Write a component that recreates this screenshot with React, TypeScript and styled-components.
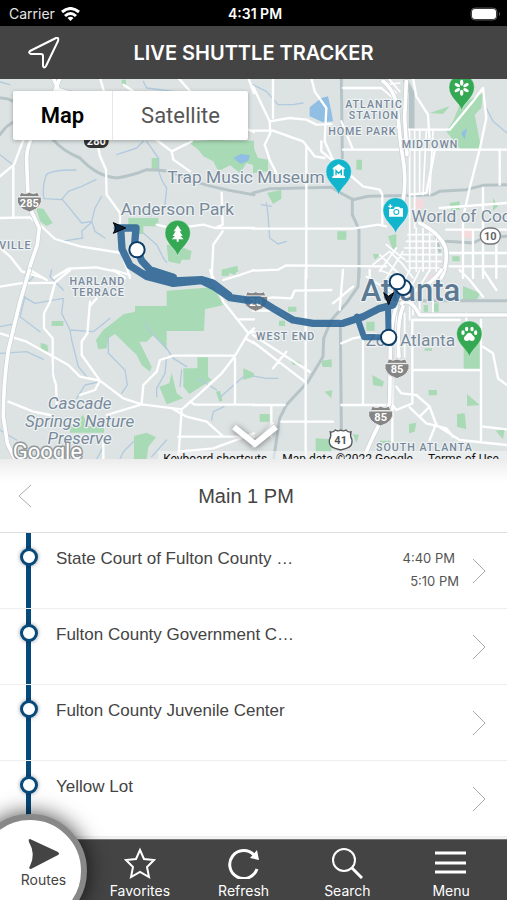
import React from "react";
import styled, { createGlobalStyle, css } from "styled-components";

const GlobalStyle = createGlobalStyle`
  *, *::before, *::after { box-sizing: border-box; }
  body { margin: 0; background: #fff; }
  button { border: 0; padding: 0; margin: 0; background: none; font: inherit; color: inherit; cursor: pointer; }
  h1, h2, ul, ol { margin: 0; padding: 0; font-weight: inherit; list-style: none; }
`;

const uiFont = `Inter, "Liberation Sans", sans-serif`;
const listFont = `"Liberation Sans", Arial, sans-serif`;
const mapFont = `Roboto, "Liberation Sans", sans-serif`;

const Page = styled.div`
  display: flex;
  flex-direction: column;
  height: 100vh;
  min-height: 600px;
  overflow: hidden;
  background: #fff;
  font-family: ${uiFont};
`;

const StatusBar = styled.div`
  display: grid;
  grid-template-columns: 1fr auto 1fr;
  align-items: center;
  flex: none;
  height: 26px;
  padding: 2px 6px 0 9px;
  background: #000;
  color: #e4e4e4;
  font-size: 14px;
  line-height: 20px;
`;

const Carrier = styled.div`
  display: flex;
  align-items: center;
  gap: 6px;
`;

const Clock = styled.time`
  color: #fff;
  font-size: 14px;
  font-weight: 600;
`;

const Battery = styled.div`
  display: flex;
  justify-content: flex-end;
`;

const TitleBar = styled.header`
  display: grid;
  grid-template-columns: 88px 1fr 88px;
  align-items: center;
  flex: none;
  height: 53px;
  background: #444;
  color: #fff;
`;

const LocateButton = styled.button`
  display: grid;
  place-items: center;
  height: 100%;
`;

const Title = styled.h1`
  text-align: center;
  white-space: nowrap;
  font-size: 20px;
  line-height: 28px;
  font-weight: 600;
`;

const MapPanel = styled.section`
  position: relative;
  flex: none;
  height: 380px;
  overflow: hidden;
  background: #dde3e3;
  font-family: ${mapFont};
`;

const MapCanvas = styled.svg`
  display: block;
  width: 100%;
  height: 100%;
`;

const MapTypes = styled.div`
  position: absolute;
  top: 12px;
  left: 13px;
  display: flex;
  height: 49px;
  border-radius: 2px;
  background: #fff;
  box-shadow: 0 1px 4px rgba(0, 0, 0, 0.3);
`;

const MapType = styled.button<{ $active?: boolean }>`
  width: ${(p) => (p.$active ? 99 : 136)}px;
  color: ${(p) => (p.$active ? "#000" : "#565656")};
  font-size: 22px;
  font-weight: ${(p) => (p.$active ? 600 : 400)};
  & + & { border-left: 1px solid #e8e8e8; }
`;

const CollapseButton = styled.button`
  position: absolute;
  left: 50%;
  bottom: 5px;
  transform: translateX(-50%);
  width: 56px;
  height: 36px;
  svg { display: block; overflow: visible; filter: drop-shadow(0 1px 3px rgba(0, 0, 0, 0.5)); }
`;

const MapCredits = styled.div`
  position: absolute;
  right: 0;
  bottom: -8px;
  display: flex;
  gap: 15px;
  padding: 0 8px 0 5px;
  background: rgba(245, 245, 245, 0.6);
  color: #111;
  font-size: 12px;
  line-height: 16px;
  white-space: nowrap;
  a { color: inherit; text-decoration: none; }
`;

const RouteBar = styled.div`
  display: grid;
  grid-template-columns: 50px 1fr 65px;
  align-items: center;
  flex: none;
  height: 74px;
  padding-top: 1px;
  border-bottom: 1px solid #dedede;
  background: linear-gradient(#ececec, #fafafa 16px, #fff 24px);
  color: #444;
`;

const BackButton = styled.button`
  display: grid;
  place-items: center;
  height: 100%;
`;

const RouteName = styled.h2`
  text-align: center;
  font-family: ${listFont};
  font-size: 20px;
  line-height: 24px;
`;

const Stops = styled.ol`
  flex: 1;
  min-height: 0;
  overflow: hidden;
  background: #f3f3f3;
`;

const Stop = styled.li`
  height: 76px;
  border-bottom: 1px solid #eee;
  background: #fff;
`;

const StopButton = styled.button`
  display: grid;
  grid-template-columns: 56px 1fr auto 48px;
  width: 100%;
  height: 100%;
  color: #444;
  text-align: left;
  font-family: ${listFont};
`;

const Track = styled.span`
  display: flex;
  justify-content: center;
  height: 100%;
  padding-top: 15px;
  background: linear-gradient(#064a7c, #064a7c) 26px 0 / 5px 100% no-repeat;
`;

const StopDot = styled.span`
  width: 18px;
  height: 18px;
  margin-left: 1px;
  border: 3px solid #064a7c;
  border-radius: 50%;
  background: #fff;
  box-shadow: 0 0 4px rgba(0, 0, 0, 0.4);
`;

const StopName = styled.span`
  padding-top: 15px;
  font-size: 17px;
  line-height: 22px;
  white-space: nowrap;
`;

const Times = styled.span`
  display: flex;
  flex-direction: column;
  padding-top: 14px;
  font-family: ${uiFont};
  font-size: 13px;
  line-height: 23px;
  color: #555;
`;

const Departure = styled.span<{ $inset?: boolean }>`
  text-align: right;
  padding-right: ${(p) => (p.$inset ? 4 : 0)}px;
`;

const Chevron = styled.span`
  display: grid;
  place-items: center;
  padding-right: 9px;
`;

const TabBar = styled.nav`
  position: relative;
  flex: none;
  height: 61px;
  border-top: 1px solid #777;
  background: #444;
  color: #fff;
`;

const Tabs = styled.ul`
  display: grid;
  grid-template-columns: 88px repeat(4, 1fr);
  height: 100%;
  padding-right: 4px;
`;

const tabText = css`
  font-size: 14px;
  line-height: 18px;
`;

const TabButton = styled.button`
  display: flex;
  flex-direction: column;
  align-items: center;
  width: 100%;
  height: 100%;
  padding-top: 7px;
  gap: 3px;
  ${tabText}
`;

const RoutesButton = styled.button`
  position: absolute;
  left: -27px;
  top: -26px;
  display: flex;
  flex-direction: column;
  align-items: center;
  width: 114px;
  height: 114px;
  padding: 19px 0 0 27px;
  gap: 2px;
  border: 6px solid #888;
  border-radius: 50%;
  background: #fff;
  color: #444;
  box-shadow: 0 0 22px rgba(0, 0, 0, 0.75);
  ${tabText}
`;

/* ---------- map artwork: four tiles, three units to a pixel ---------- */

const tiles = [
  {
    at: "translate(0 -3)",
    parks: [
      "M562 190 L640 186 L762 188 V262 L740 255 L720 285 L690 262 L655 280 L640 250 L610 235 L595 215 Z",
      "M455 240 H478 V275 H455 Z",
      "M108 390 L130 392 L158 435 L140 445 L120 430 Z",
      "M385 420 H475 V445 H430 V468 H415 V445 H385 Z",
      "M500 500 L540 505 L575 520 L570 545 L545 545 L540 558 L505 550 Z",
      "M665 575 L712 563 L715 582 L690 582 L685 594 H665 Z",
      "M365 5 H378 V25 H365 Z",
    ],
    blocks: [],
    lakes: ["M700 240 L722 228 L750 232 L745 248 L722 258 Z"],
    streams: [
      "M228 276 Q150 275 138 292 Q125 330 132 362 L185 365 L205 340 L245 325 L288 305",
      "M305 355 L285 390 L275 430 L245 435 L200 380 L185 362 M275 430 L285 460 L315 480",
      "M275 432 L245 460 L248 480 L185 490",
      "M440 190 L475 240 Q470 290 500 330 L495 380 L450 415",
      "M350 230 L410 210 L430 190 M0 230 L40 262 M430 465 L470 500 L490 540 L500 553",
      "M430 10 L440 30 L520 40 M0 12 L30 20",
    ],
    rails: [
      "M0 60 Q20 58 40 70 M0 170 Q20 140 45 130",
      "M160 186 Q190 220 240 240 Q290 295 350 300 Q400 292 440 275 Q500 275 530 288 Q600 325 762 350",
    ],
    roads: [
      "M300 0 L312 40 L290 186 L300 235 L318 275 L320 350 L360 405 V440",
      "M70 186 L42 260 L0 295 M40 260 V420 M0 420 L90 418 L130 450 L165 483 L240 505 L365 525 L390 600",
      "M0 510 L30 535 L65 580 L130 600 M160 600 L205 572 L290 568 L345 580 L375 600",
      "M535 0 L575 45 M370 20 L400 40 M470 186 L515 220 L520 245 L570 280 M515 220 L575 190 M745 155 L762 162 M745 0 L762 45",
      "M470 440 L520 452 L610 440 L645 450 L762 450 M645 450 L668 440 L665 345 M668 460 L640 500 L635 600",
    ],
    highways: ["M180 0 L160 50 L92 186 Q78 220 80 250 L85 380 L118 450 L112 500 L78 600", "M160 0 L175 35 L210 45"],
    streets: [],
  },
  {
    at: "translate(759 -3)",
    parks: [
      "M620 80 L690 45 L685 90 L665 110 L685 213 L620 213 L580 160 L600 130 Z",
      "M530 105 L590 85 L570 108 Z",
      "M0 205 L15 240 L45 245 L45 280 L0 285 Z",
      "M310 245 H327 V275 H310 Z M42 345 L85 335 L85 362 L60 378 Z",
      "M253 460 H280 V485 H253 Z M405 475 L430 468 V505 L420 518 Z M360 528 H385 L365 545 Z",
      "M590 375 L620 370 V395 L595 400 Z M720 360 L735 385 L720 398 Z M598 535 H620 V550 H598 Z M650 225 L665 215",
    ],
    blocks: ["M480 362 H512 V392 H480 Z M622 450 H658 V480 H622 Z M520 600 L560 580 L550 600 Z"],
    lakes: ["M170 88 L205 60 L225 55 L235 100 L240 130 L210 133 L170 115 Z", "M625 165 L642 150 L635 185 Z"],
    streams: ["M0 20 L40 40 L75 80 L120 80 L150 75", "M40 375 L45 410 L50 480 L75 498 L100 490 M25 380 L55 385", "M700 90 L720 130 L762 165"],
    rails: [
      "M265 0 L268 240",
      "M0 345 L50 332 L235 328 Q270 350 300 365 L345 355 L500 352 L540 350 L560 340 L640 335 L690 322 L762 320",
      "M298 362 V410 L318 455 V600 M455 10 L472 45 V155 M462 10 L480 45 V155 M580 490 L660 495 L690 480 L762 475",
      "M550 480 L560 520",
    ],
    roads: [
      "M0 25 L50 130 L110 120 L160 125 L190 140 L235 138 M60 0 V120 M50 130 L52 165 L35 200 L50 245 L70 285",
      "M0 158 H60 L150 190 L185 235 L215 240 M205 190 L205 220 L235 245 M175 0 L185 40 L220 90 L215 190 L240 245",
      "M270 30 H385 M270 215 H762 M265 130 L300 215 M160 205 V600 M290 290 L330 325 L380 335 L388 350",
      "M0 452 H300 L375 440 L400 445 M0 578 L75 575 L100 562 L400 565 M388 355 V440",
      "M480 0 L490 55 L525 110 L530 190 M460 155 H590 M590 155 L660 70 L690 30 L700 120 L680 215 L650 330 L630 420 V600",
      "M470 350 L520 345 L545 220 M560 390 L762 375 M690 330 V600 M740 215 V320",
      "M580 455 H762 M590 525 H762 M590 565 H762 M660 455 V600 M730 500 V600",
    ],
    highways: [
      "M390 10 Q430 40 435 110 Q440 180 448 230 Q462 300 450 370",
      "M460 10 L455 120 L462 230",
      "M500 435 Q560 465 578 510 Q585 560 565 600",
    ],
    streets: [
      "M470 160 V450 M485 160 V450 M500 160 V340 M520 160 L510 350 M540 160 L530 350",
      "M465 470 H550 M460 490 H560 M455 510 H565 M450 530 H565 M460 550 H565 M470 570 H560",
      "M470 450 V580 M490 450 V580 M510 450 V580 M530 460 V580 M550 480 V580",
      "M360 560 L410 520 L450 560 L480 600 M400 500 L455 545 M380 530 L440 590 M430 510 L380 580 M450 520 L400 600",
      "M395 10 L430 45 M410 5 L440 40 M400 20 L440 15 M385 30 L420 60",
    ],
  },
  {
    at: "translate(0 573)",
    parks: [
      "M500 62 L640 52 L670 105 L615 118 L612 183 L500 183 V240 L460 195 L440 215 L418 215 L455 290 L450 305 L425 285 L410 255 L345 192 L325 205 L320 235 L295 238 L288 210 L310 180 L372 132 L405 125 V108 H500 Z",
      "M550 295 H592 V262 H624 V320 L635 330 L568 372 L550 350 Z",
      "M478 350 L508 340 L515 308 L530 370 L550 385 L500 403 Z",
      "M155 153 H190 V168 H155 Z M122 218 L142 225 L145 245 L122 240 Z",
      "M210 470 L250 435 L262 468 L312 470 V488 H210 Z M402 498 L440 488 L468 502 L445 530 L440 567 H402 Z",
      "M730 295 L762 310 V320 L730 330 Z M648 365 L660 362 L668 392 L658 395 Z M665 0 H712 L705 15 Z",
    ],
    blocks: [],
    lakes: [],
    streams: [
      "M100 20 L75 50 L70 80 L105 100 L190 85 M75 80 L60 140 L120 185 M155 0 L150 20 L190 60",
      "M190 85 L185 130 L210 180 L280 185 L330 145 M210 180 L215 210 L235 290 L260 320 M325 200 L325 250 L375 300 L382 345 L365 370",
      "M0 250 L80 245 L130 268 M0 170 L50 160 M435 160 L445 180 L500 235 L520 265 L560 290",
      "M500 260 L495 310 L470 355 V380 M545 300 L540 350 M595 325 L650 360 M662 380 L730 320",
      "M230 385 L255 345 L300 335 M360 567 L370 545 L400 515 M290 567 L310 530 M455 560 L500 510 M635 450 L640 425 L672 410",
      "M0 480 L50 510 M155 280 V310 L165 325",
    ],
    rails: [],
    roads: [
      "M0 50 L60 40 L165 38 L210 0 M90 0 L140 30 M165 38 L150 95 L132 130 V175 L158 205 V310 L168 345 L170 400",
      "M0 190 L80 215 L205 285 L240 320 L300 332 L370 385 L425 403 L545 418 L600 370 L665 310 L700 265 L745 190",
      "M270 95 L262 190 L245 215 V255 L300 332 L285 360 L240 375 M268 110 L290 85 M25 395 L100 425 L150 435 M320 435 L425 403",
      "M425 400 L430 345 L470 305 L480 270 L520 257 H705 M545 418 L535 567 M515 415 L560 440 L620 455 L670 500",
      "M705 265 V403 M570 395 L585 404 H762 M535 500 H762 M310 500 V567 M535 545 L640 535 L762 490",
      "M630 0 L670 95 L745 190 L762 185 M670 30 L720 15 L762 0 M715 148 H762 M735 205 L762 220 M745 190 L762 175",
      "M340 0 L390 15",
    ],
    highways: ["M88 0 L60 95 L25 240 Q10 340 10 440 L22 520 L45 567"],
    streets: [],
  },
  {
    at: "translate(759 573)",
    parks: [
      "M632 190 H684 V300 H632 Z M630 48 L682 70 L670 92 H630 Z M340 155 H365 V182 H340 Z",
      "M105 110 H130 V125 H105 Z M78 152 H96 V168 H78 Z M205 272 L236 268 V292 L208 290 Z M215 365 L238 360 L235 385 Z",
      "M358 315 L393 335 L388 350 L360 345 Z M527 360 H552 V376 H527 Z M642 372 L680 405 L642 408 Z M612 432 L635 430 L640 478 L612 470 Z",
      "M468 462 L490 458 L485 485 L468 490 Z M188 505 L235 508 V545 H188 Z M300 492 L318 495 L310 520 Z M728 482 L755 478 L750 508 Z M20 432 H50 V455 H20 Z M515 235 H537 V242 H515 Z M110 265 L145 280 L120 285 Z",
      "M512 105 H525 V125 H512 Z M542 100 H557 V125 H542 Z M380 512 H412 V520 H380 Z",
    ],
    blocks: ["M530 20 L555 5 L562 12 L535 32 Z"],
    lakes: [],
    streams: ["M0 318 L40 325 L75 325"],
    rails: [
      "M318 0 L315 50 L280 100 L235 150 L212 205 L210 260 L165 335 L100 405 L80 445 L62 567",
      "M262 165 L265 480 M440 92 H762",
    ],
    roads: [
      "M0 92 L60 82 L115 85 L125 62 L235 60 M158 0 V567 M0 122 H80 L110 150 M0 215 L155 335 M0 195 L170 305 M60 295 L100 245",
      "M0 405 H95 M265 405 H400 M85 455 H240 M265 220 L300 205 L330 200 M330 200 V405 M55 405 V500 M240 100 L300 50",
      "M478 150 V300 H684 M478 300 V400 L430 420 L418 405 M684 150 V510 M690 230 L720 250 L735 325 L762 345 M480 150 H620 M690 470 L762 478",
      "M430 350 L445 370 L490 375 L530 410 L550 465 L620 510 L762 525 M470 412 L520 460 L580 475 L600 500 M530 410 L500 440 M418 310 V560",
      "M0 530 L60 460 M620 0 L650 30 L690 80 M690 0 L730 60 M270 0 L260 120 M350 0 L350 60 M640 130 V150 M550 460 L530 510 M265 150 L240 165",
    ],
    highways: [
      "M445 100 Q470 80 500 135 H762",
      "M430 110 Q410 170 412 280 L410 400 L360 500 L330 567",
      "M450 110 Q430 160 438 260",
      "M565 0 Q540 40 490 60 L440 85",
    ],
    streets: [
      "M380 0 L480 40 M340 20 L440 80 M470 0 L440 60 M500 0 L470 60 M530 0 L500 50 M450 20 L480 55 M430 130 V260 M455 130 V260 M470 110 V150",
      "M480 90 V135 M500 90 V135 M540 90 V135",
    ],
  },
];

const join = (p: string[]) => p.join(" ");

const MapTile = ({ tile }: { tile: (typeof tiles)[number] }) => (
  <g transform={tile.at} fill="none" strokeLinejoin="round" strokeLinecap="round">
    <path d={join(tile.parks)} fill="#a8dab5" />
    <path d={join(tile.blocks)} fill="#f3dadd" />
    <path d={join(tile.lakes)} fill="#90bfe3" />
    <path d={join(tile.streams)} stroke="#b2cade" strokeWidth="4" />
    <path d={join(tile.rails)} stroke="#b7c4c7" strokeWidth="9" />
    <path d={join(tile.roads)} stroke="#fff" strokeWidth="7" />
    <path d={join(tile.streets)} stroke="#fff" strokeWidth="5" />
    <path d={join(tile.highways)} stroke="#c9d1d3" strokeWidth="15" />
    <path d={join(tile.highways)} stroke="#fff" strokeWidth="11" />
  </g>
);

const Halo = styled.text`
  paint-order: stroke;
  stroke: #eef2f2;
  stroke-width: 7px;
  stroke-linejoin: round;
  fill: #78899b;
`;
const Place = styled(Halo)`
  font-size: 52px;
`;
const Area = styled(Halo)`
  font-size: 32px;
  font-weight: 500;
  letter-spacing: 3px;
  text-anchor: middle;
`;
const Reserve = styled(Halo)`
  font-size: 51px;
  font-style: italic;
  text-anchor: middle;
`;
const City = styled(Halo)`
  font-size: 93px;
  font-weight: 500;
  fill: #5c7994;
`;
const ShieldText = styled.text`
  font-size: 33px;
  font-weight: 700;
  text-anchor: middle;
`;
const Logo = styled.text`
  font-family: Roboto, sans-serif;
  font-size: 66px;
  font-weight: 400;
  fill: #fff;
  stroke: #929799;
  stroke-width: 9px;
  stroke-linejoin: round;
  paint-order: stroke;
`;

const Interstate = ({ x, y, n }: { x: number; y: number; n: string }) => (
  <g transform={`translate(${x} ${y})`}>
    <path d="M-25 -27 Q-12 -20 0 -27 Q12 -20 25 -27 L31 -14 H-31 Z" fill="#858585" stroke="#eee" strokeWidth="3" />
    <path d="M-36 -13 H36 Q42 19 0 32 Q-42 19 -36 -13 Z" fill="#858585" stroke="#eee" strokeWidth="3" />
    <ShieldText y="16" fill="#fff">{n}</ShieldText>
  </g>
);

const Pin = ({ x, y, color, children }: { x: number; y: number; color: string; children: React.ReactNode }) => (
  <g transform={`translate(${x} ${y})`}>
    <path
      d="M0 68 C-6 45 -38 30 -38 -1 A38 38 0 0 1 38 -1 C38 30 6 45 0 68 Z"
      fill={color}
      stroke="#fff"
      strokeOpacity="0.5"
      strokeWidth="2"
    />
    <g fill="#fff">{children}</g>
  </g>
);

const StopMarker = ({ x, y }: { x: number; y: number }) => (
  <circle cx={x} cy={y} r="23" fill="#fff" stroke="#0b3c68" strokeWidth="6" />
);

const MapArtwork = () => (
  <MapCanvas viewBox="0 0 1521 1140" preserveAspectRatio="xMidYMid slice" role="img" aria-label="Map of Atlanta with the shuttle route">
    {tiles.map((tile) => (
      <MapTile key={tile.at} tile={tile} />
    ))}

    <g transform="translate(0 -3)">
      <rect x="252" y="168" width="74" height="42" rx="20" fill="#333" />
      <ShieldText x="289" y="200" fill="#fff">280</ShieldText>
      <Interstate x={88} y={370} n="285" />
      <Place x="502" y="316">Trap Music Museum</Place>
      <Place x="362" y="411">Anderson Park</Place>
      <Area x="46" y="514">VILLE</Area>
    </g>
    <g transform="translate(759 -3)">
      <Area x="363" y="90">ATLANTIC</Area>
      <Area x="363" y="122">STATION</Area>
      <Area x="328" y="172">HOME PARK</Area>
      <Area x="531" y="209">MIDTOWN</Area>
      <Place x="475" y="432">World of Coca-Cola</Place>
      <rect x="682" y="450" width="60" height="48" rx="24" fill="#fff" stroke="#777" strokeWidth="4" />
      <ShieldText x="712" y="486" fill="#666">10</ShieldText>
    </g>
    <g transform="translate(0 573)">
      <Area x="292" y="46">HARLAND</Area>
      <Area x="295" y="79">TERRACE</Area>
      <Reserve x="239" y="417">Cascade</Reserve>
      <Reserve x="239" y="470">Springs Nature</Reserve>
      <Reserve x="239" y="521">Preserve</Reserve>
      <Logo x="38" y="567">Google</Logo>
    </g>
    <g transform="translate(759 573)">
      <Area x="98" y="210">WEST END</Area>
      <Place x="338" y="228">Zoo Atlanta</Place>
      <City x="323" y="94">Atlanta</City>
      <Area x="514" y="543">SOUTH ATLANTA</Area>
      <Interstate x={8} y={92} n="20" />
      <Interstate x={432} y={294} n="85" />
      <Interstate x={383} y={436} n="85" />
      <path
        d="M232 486 Q242 488 247 480 Q255 485 263 480 Q271 485 279 480 Q284 488 294 486 Q290 498 297 510 Q299 530 280 535 L263 540 L246 535 Q227 530 229 510 Q236 498 232 486 Z"
        fill="#fff"
        stroke="#555"
        strokeWidth="4"
      />
      <ShieldText x="263" y="522" fill="#555">41</ShieldText>
    </g>

    <g fill="none" stroke="#2f6796" strokeLinejoin="round" strokeLinecap="round" opacity="0.9">
      <path
        d="M352 447 H408 L404 495 L425 545 L450 572 L520 595 M362 447 L366 510 L390 560 L440 592 L520 613 L605 605 L640 622 L690 656 L740 663 L779 663 L819 688 L879 723 L939 733 L1029 733 L1089 713 L1139 688 L1179 678 L1192 645 L1204 610"
        strokeWidth="22"
      />
      <path d="M420 578 L520 602 L605 598 L640 608 L690 646" strokeWidth="14" />
      <path d="M1164 683 L1166 775 H1092 L1071 713" strokeWidth="18" />
    </g>
    <path d="M340 431 L377 447 L340 463 L348 447 Z" fill="#0d2238" stroke="#000" strokeWidth="3" />
    <path d="M1151 641 L1165 652 L1181 641 L1166 677 Z" fill="#0d2238" stroke="#000" strokeWidth="3" />
    <StopMarker x={411} y={512} />
    <StopMarker x={1210} y={625} />
    <StopMarker x={1192} y={608} />
    <StopMarker x={1166} y={775} />

    <Pin x={533} y={463} color="#35a853">
      <path d="M0 -24 L12 -6 H6 L15 8 H8 L18 18 H3 V25 H-3 V18 H-18 L-8 8 H-15 L-6 -6 H-12 Z" />
    </Pin>
    <Pin x={1385} y={26} color="#35a853">
      {[0, 60, 120, 180, 240, 300].map((a) => (
        <ellipse key={a} cy="-15" rx="5" ry="9" transform={`rotate(${a})`} />
      ))}
    </Pin>
    <Pin x={1016} y={279} color="#12b5cb">
      <path d="M0 -24 L18 -12 V-8 H15 V13 H19 V18 H-19 V13 H-15 V-8 H-18 V-12 Z" />
      <path d="M-8 10 V-4 L0 4 L8 -4 V10" fill="none" stroke="#12b5cb" strokeWidth="4" />
    </Pin>
    <Pin x={1187} y={395} color="#12b5cb">
      <path
        fillRule="evenodd"
        d="M-20 -5 H-6 L-2 -12 H10 L14 -7 H22 V18 H-20 Z M2 -5 A9 9 0 1 0 2 13 A9 9 0 1 0 2 -5 Z"
      />
      <circle cx="2" cy="4" r="6" />
      <path d="M-22 -13 H-10 M-16 -19 V-7" stroke="#fff" strokeWidth="4" />
    </Pin>
    <Pin x={1408} y={765} color="#35a853">
      <ellipse cx="-19" cy="-4" rx="5" ry="7" />
      <ellipse cx="-8" cy="-15" rx="5" ry="7" />
      <ellipse cx="8" cy="-15" rx="5" ry="7" />
      <ellipse cx="19" cy="-4" rx="5" ry="7" />
      <path d="M0 -4 Q7 -4 10 4 Q20 12 14 19 Q8 23 0 18 Q-8 23 -14 19 Q-20 12 -10 4 Q-7 -4 0 -4 Z" />
    </Pin>
  </MapCanvas>
);

/* ---------- icons ---------- */

const WifiIcon = () => (
  <svg width="19" height="14" viewBox="0 0 19 14" fill="none" stroke="#fff" strokeWidth="3" aria-label="Wi-Fi">
    <path d="M1 5 Q9.500 -2 18 5" />
    <path d="M4 9 Q9.500 4 15 9" />
    <path d="M9.500 14 L6.500 11 Q9.500 8.500 12.500 11 Z" fill="#fff" stroke="none" />
  </svg>
);

const BatteryIcon = () => (
  <svg width="31" height="14" viewBox="0 0 31 14" aria-label="Battery full">
    <rect x="1" y="1" width="26" height="12" rx="4" fill="#222" stroke="#555" />
    <rect x="2" y="2" width="24" height="10" rx="3" fill="#fff" />
    <path d="M29 5 Q31 7 29 9 Z" fill="#666" />
  </svg>
);

const LocateIcon = () => (
  <svg width="32" height="32" viewBox="0 0 32 32" fill="none" stroke="#fff" strokeWidth="2" strokeLinejoin="round" aria-hidden="true">
    <path d="M28 1 L2 14 Q0 16 3 17 H13 Q15 17 15 19 V29 Q16 32 18 29 L30 4 Q31 0 28 1 Z" />
  </svg>
);

const RoutesIcon = () => (
  <svg width="32" height="30" viewBox="0 0 32 30" fill="#444" aria-hidden="true">
    <path d="M2 0 L30 13 Q32 15 30 16 L3 30 Q0 30 2 27 Q8 15 1 3 Q0 0 2 0 Z" />
  </svg>
);

const StarIcon = () => (
  <svg width="32" height="32" viewBox="0 0 32 32" fill="none" stroke="#fff" strokeWidth="2" aria-hidden="true">
    <path d="M16 3 L20 12 L30 13 L23 20 L25 30 L16 25 L7 30 L9 20 L2 13 L12 12 Z" />
  </svg>
);

const RefreshIcon = () => (
  <svg width="32" height="32" viewBox="0 0 32 32" fill="none" stroke="#fff" strokeWidth="3" aria-hidden="true">
    <path d="M26 8 A14 14 0 1 0 29 22" />
    <path d="M29 3 L31 13 L22 11 Z" fill="#fff" stroke="none" />
  </svg>
);

const SearchIcon = () => (
  <svg width="32" height="32" viewBox="0 0 32 32" fill="none" stroke="#fff" strokeWidth="2" aria-hidden="true">
    <circle cx="13" cy="13" r="11" />
    <path d="M21 21 L31 31" strokeWidth="3" />
  </svg>
);

const MenuIcon = () => (
  <svg width="32" height="32" viewBox="0 0 32 32" stroke="#fff" strokeWidth="3" aria-hidden="true">
    <path d="M0 6 H31 M0 16 H31 M0 25 H31" />
  </svg>
);

const stops = [
  { name: "State Court of Fulton County …", times: ["4:40 PM", "5:10 PM"] },
  { name: "Fulton County Government C…", times: [] },
  { name: "Fulton County Juvenile Center", times: [] },
  { name: "Yellow Lot", times: [] },
];

const tabs = [
  { label: "Favorites", Icon: StarIcon },
  { label: "Refresh", Icon: RefreshIcon },
  { label: "Search", Icon: SearchIcon },
  { label: "Menu", Icon: MenuIcon },
];

export default function App() {
  return (
    <>
      <GlobalStyle />
      <Page>
        <StatusBar>
          <Carrier>
            Carrier
            <WifiIcon />
          </Carrier>
          <Clock>4:31 PM</Clock>
          <Battery>
            <BatteryIcon />
          </Battery>
        </StatusBar>
        <TitleBar>
          <LocateButton aria-label="My location">
            <LocateIcon />
          </LocateButton>
          <Title>LIVE SHUTTLE TRACKER</Title>
        </TitleBar>
        <MapPanel>
          <MapArtwork />
          <MapTypes>
            <MapType $active>Map</MapType>
            <MapType>Satellite</MapType>
          </MapTypes>
          <MapCredits>
            <button>Keyboard shortcuts</button>
            <span>Map data ©2022 Google</span>
            <a href="#terms">Terms of Use</a>
          </MapCredits>
          <CollapseButton aria-label="Collapse map">
            <svg width="56" height="36" viewBox="0 0 56 36" fill="none" stroke="#fff" strokeWidth="6" aria-hidden="true">
              <path d="M8 9 L29 26 L50 9" />
            </svg>
          </CollapseButton>
        </MapPanel>
        <RouteBar>
          <BackButton aria-label="Back">
            <svg width="14" height="24" viewBox="0 0 14 24" fill="none" stroke="#aaa" aria-hidden="true">
              <path d="M13 1 L1 12 L13 23" />
            </svg>
          </BackButton>
          <RouteName>Main 1 PM</RouteName>
        </RouteBar>
        <Stops>
          {stops.map((stop) => (
            <Stop key={stop.name}>
              <StopButton>
                <Track>
                  <StopDot />
                </Track>
                <StopName>{stop.name}</StopName>
                <Times>
                  {stop.times.map((time, i) => (
                    <Departure key={time} $inset={i === 0}>
                      {time}
                    </Departure>
                  ))}
                </Times>
                <Chevron>
                  <svg width="14" height="26" viewBox="0 0 14 26" fill="none" stroke="#aaa" aria-hidden="true">
                    <path d="M1 1 L13 13 L1 25" />
                  </svg>
                </Chevron>
              </StopButton>
            </Stop>
          ))}
        </Stops>
        <TabBar>
          <Tabs>
            <li>
              <RoutesButton aria-current="page">
                <RoutesIcon />
                Routes
              </RoutesButton>
            </li>
            {tabs.map(({ label, Icon }) => (
              <li key={label}>
                <TabButton>
                  <Icon />
                  {label}
                </TabButton>
              </li>
            ))}
          </Tabs>
        </TabBar>
      </Page>
    </>
  );
}
